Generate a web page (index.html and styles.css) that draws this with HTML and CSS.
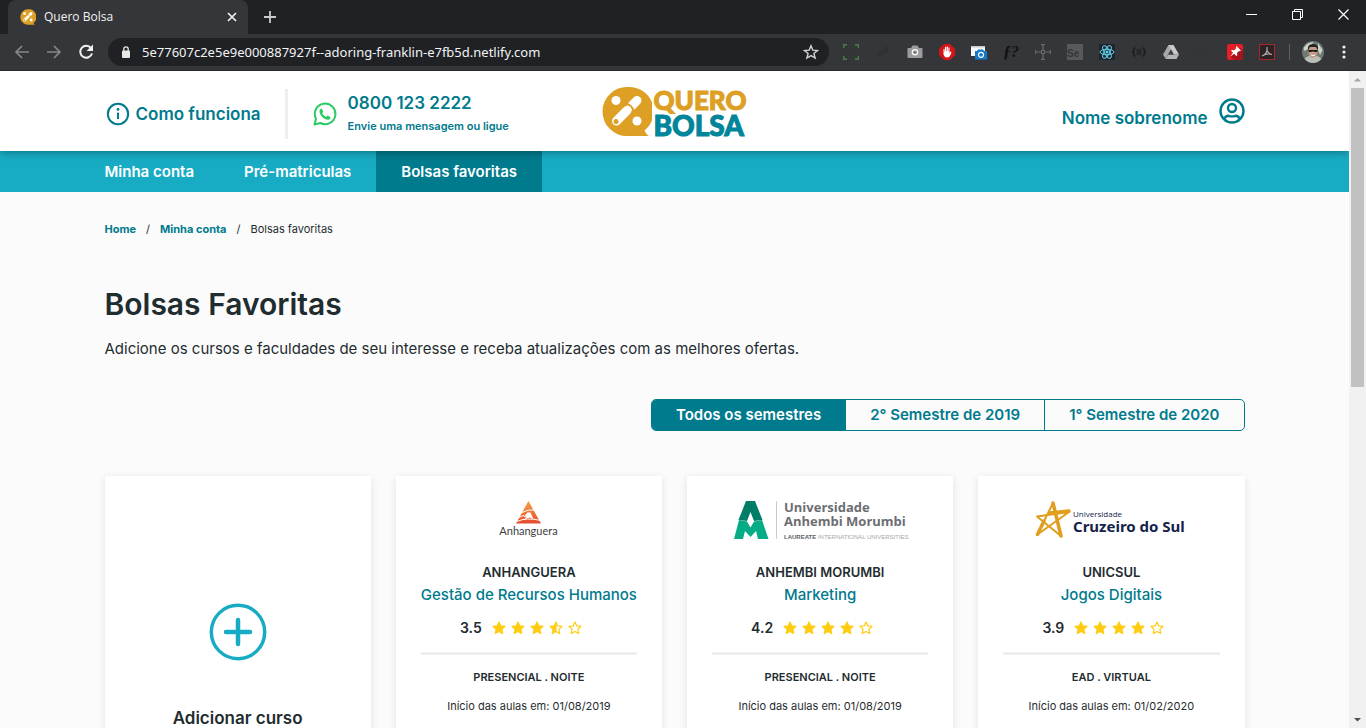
FILE: index.html
```html
<!DOCTYPE html>
<html lang="pt-BR">
<head>
<meta charset="utf-8">
<meta name="viewport" content="width=device-width, initial-scale=1">
<title>Quero Bolsa</title>
<link rel="stylesheet" href="styles.css">
</head>
<body>
<svg class="defs" aria-hidden="true">
  <defs>
    <symbol id="mark" viewBox="0 0 50 51">
      <path d="M25 1a24.500 24.500 0 1 0 0 49h22c-2-1.300-3.500-3-4.500-5.500A24.500 24.500 0 0 0 25 1z" fill="#dd9f24"/>
      <circle cx="14" cy="14.500" r="4.500" fill="#fff"/>
      <circle cx="35" cy="35" r="4.500" fill="#fff"/>
      <path d="M29.500 20l5.500-5.500M14.500 35L25 24.500" stroke="#fff" stroke-width="9" stroke-linecap="round"/>
      <path d="M24 17.500c4 1 6.500 3.500 7.500 7.500" stroke="#dd9f24" stroke-width="2" fill="none"/>
      <circle cx="14" cy="35.500" r="2.500" fill="#dd9f24"/>
    </symbol>
    <symbol id="star" viewBox="0 0 14 14">
      <path d="M7 1l1.800 3.900 4.200.5-3.100 2.900.8 4.300L7 10.500l-3.700 2.100.8-4.300L1 5.400l4.200-.5z" fill="#fc1" stroke="#fc1" stroke-width="1.200" stroke-linejoin="round"/>
    </symbol>
    <symbol id="star-empty" viewBox="0 0 14 14">
      <path d="M7 1l1.800 3.900 4.200.5-3.100 2.900.8 4.300L7 10.500l-3.700 2.100.8-4.300L1 5.400l4.200-.5z" fill="none" stroke="#fc1" stroke-width="1.200" stroke-linejoin="round"/>
    </symbol>
    <symbol id="star-half" viewBox="0 0 14 14">
      <path d="M7 1l1.800 3.900 4.200.5-3.100 2.900.8 4.300L7 10.500l-3.700 2.100.8-4.300L1 5.400l4.200-.5z" fill="none" stroke="#fc1" stroke-width="1.200" stroke-linejoin="round"/>
      <path d="M7.500 1v9.500L3.300 12.600l.8-4.300L1 5.400l4.200-.5z" fill="#fc1"/>
    </symbol>
  </defs>
</svg>

<div class="tabstrip">
  <div class="tab">
    <svg class="tab-icon"><use href="#mark"/></svg>
    <span class="tab-title">Quero Bolsa</span>
    <button class="tab-close" aria-label="Fechar guia"><svg viewBox="0 0 10 10"><path d="M1 1l8 8M9 1L1 9" stroke="#f1f1f1" stroke-width="1.700"/></svg></button>
  </div>
  <button class="tab-new" aria-label="Nova guia"><svg viewBox="0 0 12 12"><path d="M6 0v12M0 6h12" stroke="#ccc" stroke-width="1.800"/></svg></button>
  <div class="window-buttons">
    <button aria-label="Minimizar"><svg viewBox="0 0 11 11"><path d="M0 5.500h11" stroke="#fff"/></svg></button>
    <button aria-label="Restaurar"><svg viewBox="0 0 11 11"><path d="M.5 2.500h8v8h-8zM2.500 2.500v-2h8v8h-2" fill="none" stroke="#fff"/></svg></button>
    <button aria-label="Fechar"><svg viewBox="0 0 11 11"><path d="M.5.5l10 10M10.500.5l-10 10" stroke="#fff" stroke-width="1.200"/></svg></button>
  </div>
</div>

<div class="toolbar">
  <div class="history">
    <button aria-label="Voltar"><svg viewBox="0 0 18 18"><path d="M16 9H3M9 3L3 9l6 6" fill="none" stroke="#85878a" stroke-width="1.700"/></svg></button>
    <button aria-label="Avançar"><svg viewBox="0 0 18 18"><path d="M2 9h13M9 3l6 6-6 6" fill="none" stroke="#85878a" stroke-width="1.700"/></svg></button>
    <button aria-label="Recarregar"><svg viewBox="0 0 18 18"><path d="M14 5a6 6 0 1 0 1 5.500" fill="none" stroke="#f1f1f1" stroke-width="2"/><path d="M16 1.500V8H9.500z" fill="#f1f1f1"/></svg></button>
  </div>
  <div class="omnibox">
    <svg class="lock" viewBox="0 0 10 12"><rect x="1" y="4.500" width="8" height="7.500" rx="1" fill="#e8e8e8"/><path d="M2.800 5V3a2.200 2.200 0 0 1 4.400 0v2" fill="none" stroke="#e8e8e8" stroke-width="1.300"/></svg>
    <input class="address" aria-label="Endereço" value="5e77607c2e5e9e000887927f--adoring-franklin-e7fb5d.netlify.com">
    <button class="bookmark" aria-label="Favorito"><svg viewBox="0 0 16 16"><path d="M8 1.800l1.800 4.300 4.700.4-3.600 3 1.200 4.600L8 11.600l-4.100 2.500 1.200-4.600-3.600-3 4.700-.4z" fill="none" stroke="#d2d3d4" stroke-width="1.400"/></svg></button>
  </div>
  <div class="extensions">
    <svg viewBox="0 0 16 16"><path d="M.7 4V.7H4M12 .7h3.300V4M15.300 12v3.300H12M4 15.300H.7V12" fill="none" stroke="#487c45" stroke-width="1.500"/><rect x="3" y="5" width="10" height="6" rx="1" fill="none" stroke="#303733"/></svg>
    <svg viewBox="0 0 16 16"><path d="M3 13c-3-3 1-4 3-6s5-6 7-4-1 5-3 6-5 5-7 4z" fill="#303134"/></svg>
    <svg viewBox="0 0 16 16"><path d="M1.500 4H4l1.500-2.500h5L12 4h2.500q1 0 1 1v8q0 1-1 1h-13q-1 0-1-1V5q0-1 1-1z" fill="#9c9c9c"/><circle cx="8" cy="8.300" r="3.300" fill="#f5f5f5"/><circle cx="8" cy="8.300" r="1.800" fill="#777"/></svg>
    <svg viewBox="0 0 16 16"><path d="M5 0h6l5 5v6l-5 5H5l-5-5V5z" fill="#d31517"/><path d="M4.500 7.500v3q1 3 3.500 3 2.500 0 3.500-2.500l1-3-1-.5-1 1.500V3.500H9.400V7h-.5V2.500H7.700V7h-.5V3H6v4.500h-.4V5H4.500z" fill="#fff"/></svg>
    <svg viewBox="0 0 16 16"><rect y="2" width="14" height="10" fill="#fafafa"/><path d="M0 2h14v1.500H0z" fill="#cacaca"/><path d="M4 7h2l1-1.500h5L13 7h3v8.500H4z" fill="#127acb"/><circle cx="10" cy="10.800" r="2.500" fill="none" stroke="#fff" stroke-width="1.200"/></svg>
    <span class="ext-font">ƒ?</span>
    <svg viewBox="0 0 16 16"><path d="M8 1v14M1 8h14M6 .7h4M6 15.300h4M.7 6v4M15.300 6v4" stroke="#68696b" stroke-width="1.200"/><rect x="6.500" y="6.500" width="3" height="3" fill="#35363a" stroke="#68696b"/></svg>
    <span class="ext-se">Se</span>
    <svg viewBox="0 0 16 16"><path fill="#20242b" d="M0 0h16v16H0z"/><g fill="none" stroke="#61cfec"><ellipse cx="8" cy="8" rx="7" ry="2.700"/><ellipse cx="8" cy="8" rx="7" ry="2.700" transform="rotate(60 8 8)"/><ellipse cx="8" cy="8" rx="7" ry="2.700" transform="rotate(120 8 8)"/></g><circle cx="8" cy="8" r="1.500" fill="#61cfec"/></svg>
    <svg viewBox="0 0 16 16"><path d="M5 4H3.800q-1 0-1 1.200v1.600L1.500 8l1.300 1.200v1.600q0 1.200 1 1.200H5M11 4h1.200q1 0 1 1.200v1.600L14.500 8l-1.300 1.200v1.600q0 1.200-1 1.200H11M5.500 6h5M5.500 8h5M5.500 10h5" fill="none" stroke="#17181a" stroke-width="1.200"/></svg>
    <svg viewBox="0 0 16 16"><path d="M5.500 1h5l-5.500 9.500L2.700 15 0 10.500z" fill="#a8a8a8"/><path d="M5.500 1h5L16 10.500h-5.200z" fill="#c9c9c9"/><path d="M5.200 10.500H16L13.500 15H2.700z" fill="#b5b5b5"/><path d="M8 5.800l2.700 4.700H5.300z" fill="#414245"/></svg>
    <svg viewBox="0 0 16 16"><path d="M3 6l4-3 4 2-3 5-4-1z" fill="none" stroke="#323337"/></svg>
    <svg viewBox="0 0 16 16"><rect width="16" height="16" rx="2" fill="#e61d24"/><path d="M13 4l3 3v7q0 2-2 2H8l-5-3z" fill="#a8141a"/><path d="M9.500 2l4.500 4.500-1.200.7-.8-.2-2 2 .3 2.200-1 .8-2.200-2.200L3 13l3-4.200L4 6.700l1-.8 2.200.3 2-2-.3-1.200z" fill="#fff"/></svg>
    <svg viewBox="0 0 16 16"><rect x=".5" y=".5" width="15" height="15" fill="#2b2324" stroke="#a8272b"/><path d="M8 3v3.500c1 2.500 2.500 3.500 5 4-3-1-6-1-10 1.500 3-1 4.500-3.500 5-5.500" fill="none" stroke="#b0a5a6" stroke-width="1.200"/></svg>
  </div>
  <span class="separator"></span>
  <svg class="avatar" viewBox="0 0 22 22"><circle cx="11" cy="11" r="11" fill="#6f7a70"/><path d="M1.500 7q4-6 10-6l-4 6-5 3zM16 2l4.500 7-2.500 5-2-5z" fill="#cdd5cb"/><path d="M2.500 18q4-4 8.500-4t8.500 4q-4 4-8.500 4t-8.500-4z" fill="#b9beb8"/><ellipse cx="11" cy="11" rx="4.500" ry="6" fill="#c39b86"/><path d="M6 9q-1-6 5-6t5 6l-2-3H8z" fill="#242322"/><path d="M6.500 9h9v1.200q-1 1.600-3.500.4h-2q-2.500 1.200-3.500-.4z" fill="#171717"/><path d="M9 14q2 1.500 4 0" stroke="#fff" fill="none"/></svg>
  <button class="menu" aria-label="Menu"><svg viewBox="0 0 18 18"><g fill="#f1f1f1"><circle cx="9" cy="4" r="1.600"/><circle cx="9" cy="9" r="1.600"/><circle cx="9" cy="14" r="1.600"/></g></svg></button>
</div>

<div class="viewport">
  <div class="page">
    <header class="header">
      <div class="container header-row">
        <div class="header-left">
          <a class="how" href="#"><svg class="icon-info" viewBox="0 0 26 26"><circle cx="13" cy="13" r="11" fill="none" stroke="#007a8d" stroke-width="2.200"/><path d="M13 11.500v7" stroke="#007a8d" stroke-width="2.200"/><circle cx="13" cy="8" r="1.500" fill="#007a8d"/></svg>Como funciona</a>
          <div class="contact">
            <svg class="icon-whats" viewBox="0 0 24 24"><path d="M1.500 22.500L3 16.700A10.300 10.300 0 1 1 7.300 21z" fill="none" stroke="#2bcb64" stroke-width="2" stroke-linejoin="round"/><path d="M8.700 6.500l1.600 3.200-1.100 1.500q1.200 2.500 3.800 3.700l1.400-1.500 3.100 1.500q0 2.800-3 2.800-6-1-8-7.500-.3-3 2.200-3.700z" fill="#2bcb64"/></svg>
            <div>
              <a class="phone" href="tel:08001232222">0800 123 2222</a>
              <p class="contact-note">Envie uma mensagem ou ligue</p>
            </div>
          </div>
        </div>
        <a class="brand" href="#"><svg class="brand-mark"><use href="#mark"/></svg><span class="brand-text"><span class="brand-quero">QUERO</span><span class="brand-bolsa">BOLSA</span></span></a>
        <a class="user" href="#"><span class="user-name">Nome sobrenome</span><svg class="icon-user" viewBox="0 0 26 26"><g fill="none" stroke="#007a8d" stroke-width="2.400"><circle cx="13" cy="13" r="11.500"/><circle cx="13" cy="10" r="4"/><path d="M5 21q2-3.500 4.500-3.200 3.500 1.200 7 0Q19 17.500 21 21"/></g></svg></a>
      </div>
    </header>
    <nav class="nav">
      <div class="container nav-row">
        <a href="#">Minha conta</a>
        <a href="#">Pré-matriculas</a>
        <a class="active" href="#">Bolsas favoritas</a>
      </div>
    </nav>
    <main class="container">
      <div class="breadcrumb"><a href="#">Home</a><span>/</span><a href="#">Minha conta</a><span>/</span><span>Bolsas favoritas</span></div>
      <h1>Bolsas Favoritas</h1>
      <p class="lead">Adicione os cursos e faculdades de seu interesse e receba atualizações com as melhores ofertas.</p>
      <div class="filters">
        <button class="selected">Todos os semestres</button>
        <button>2° Semestre de 2019</button>
        <button>1° Semestre de 2020</button>
      </div>
      <div class="cards">
        <button class="card card-add">
          <svg class="icon-plus" viewBox="0 0 58 58"><circle cx="29" cy="29" r="26.700" fill="none" stroke="#18acc4" stroke-width="3.500"/><path d="M29 17v24M17 29h24" stroke="#18acc4" stroke-width="4.500" stroke-linecap="round"/></svg>
          <span>Adicionar curso</span>
        </button>
        <article class="card">
          <svg class="logo" viewBox="0 0 217 42"><defs><linearGradient id="fire" x2="0" y2="1"><stop stop-color="#f7a13f"/><stop offset="1" stop-color="#e34b31"/></linearGradient></defs><path d="M108.500 1L121 23.500H96z" fill="url(#fire)"/><path d="M102 12.500q6-3.500 12-2.500M99 17.500q2.500-1.500 5-2M97 21.500q9-4.500 24-1" fill="none" stroke="#fff"/><path d="M103.500 17l4-4.500h3l3 6.500-4-1.500-5 1.500 2-2.500z" fill="#fff"/><text x="108.500" y="35" text-anchor="middle" class="logo-anh">Anhanguera</text></svg>
          <h2>ANHANGUERA</h2>
          <a class="course" href="#">Gestão de Recursos Humanos</a>
          <div class="rating"><strong>3.5</strong><span class="stars"><svg><use href="#star"/></svg><svg><use href="#star"/></svg><svg><use href="#star"/></svg><svg><use href="#star-half"/></svg><svg><use href="#star-empty"/></svg></span></div>
          <hr>
          <p class="mode">PRESENCIAL . NOITE</p>
          <p class="start">Início das aulas em: 01/08/2019</p>
        </article>
        <article class="card">
          <svg class="logo" viewBox="0 0 217 42"><path d="M34 1h9l7.500 19-8.500 1-3.500-9-3.500 9-8.500-1z" fill="#007d69"/><path d="M27 20l8 1.500 3.500 6 3.500-6 8-1.500 6.500 19H46l-2-8-5.500 6L33 31l-2 8H22z" fill="#05ac85"/><path d="M64.500 1v38" stroke="#c8cacb"/><text x="72" y="12" class="logo-amu">Universidade</text><text x="72" y="26" class="logo-amu">Anhembi Morumbi</text><text x="72" y="39" class="logo-laureate"><tspan font-weight="700" fill="#5d6063">LAUREATE</tspan> INTERNATIONAL UNIVERSITIES</text></svg>
          <h2>ANHEMBI MORUMBI</h2>
          <a class="course" href="#">Marketing</a>
          <div class="rating"><strong>4.2</strong><span class="stars"><svg><use href="#star"/></svg><svg><use href="#star"/></svg><svg><use href="#star"/></svg><svg><use href="#star"/></svg><svg><use href="#star-empty"/></svg></span></div>
          <hr>
          <p class="mode">PRESENCIAL . NOITE</p>
          <p class="start">Início das aulas em: 01/08/2019</p>
        </article>
        <article class="card">
          <svg class="logo" viewBox="0 0 217 42"><path d="M50 3L34.500 34.500 66 12 34 16.500 58 36z" fill="none" stroke="#e19d1e" stroke-width="2" stroke-linejoin="round"/><path d="M50 3l8 33M34.500 34.500L41 21M66 11l-19 2" stroke="#e19d1e" stroke-width="3.500" stroke-linecap="round"/><text x="70" y="17" class="logo-uni">Universidade</text><text x="70" y="32" class="logo-sul">Cruzeiro do Sul</text></svg>
          <h2>UNICSUL</h2>
          <a class="course" href="#">Jogos Digitais</a>
          <div class="rating"><strong>3.9</strong><span class="stars"><svg><use href="#star"/></svg><svg><use href="#star"/></svg><svg><use href="#star"/></svg><svg><use href="#star"/></svg><svg><use href="#star-empty"/></svg></span></div>
          <hr>
          <p class="mode">EAD . VIRTUAL</p>
          <p class="start">Início das aulas em: 01/02/2020</p>
        </article>
      </div>
    </main>
  </div>
  <div class="scrollbar"><svg viewBox="0 0 17 17"><path d="M5 10.500h7L8.500 7z" fill="#a3a3a3"/></svg><div class="track"><div class="thumb"></div></div><svg viewBox="0 0 17 17"><path d="M5 7h7l-3.500 3.500z" fill="#505050"/></svg></div>
</div>
</body>
</html>
```
FILE: styles.css
```css
* { box-sizing: border-box; }

body {
  display: flex;
  flex-direction: column;
  height: 100vh;
  margin: 0;
  overflow: hidden;
  background: #fbfbfb;
  color: #1f2d30;
  font-family: Inter, "Liberation Sans", sans-serif;
}

svg { display: block; }
button { padding: 0; border: 0; background: none; color: inherit; font: inherit; }
a { color: #007a8d; text-decoration: none; }
h1, h2, p { margin: 0; }
.defs { position: absolute; width: 0; height: 0; }

/* Browser frame */
.tabstrip {
  display: flex;
  flex: none;
  align-items: center;
  height: 34px;
  padding-left: 8px;
  background: #202124;
}
.tab {
  display: flex;
  align-items: center;
  gap: 8px;
  width: 240px;
  height: 34px;
  padding: 0 11px 0 12px;
  border-radius: 8px 8px 0 0;
  background: #35363a;
  color: #f1f1f1;
  font-family: "Open Sans", sans-serif;
  font-size: 12px;
  line-height: 16px;
}
.tab-icon { width: 16px; height: 16px; }
.tab-title { flex: 1; }
.tab-close svg { width: 10px; height: 10px; }
.tab-new { margin-left: 16px; }
.tab-new svg { width: 12px; height: 12px; }
.window-buttons { display: flex; margin-left: auto; padding: 0 0 6px; }
.window-buttons button { display: grid; place-items: center; width: 46px; height: 28px; }
.window-buttons svg { width: 11px; height: 11px; }

.toolbar {
  display: flex;
  flex: none;
  align-items: center;
  height: 37px;
  padding: 0 13px;
  border-bottom: 1px solid #28292c;
  background: #35363a;
}
.history { display: flex; gap: 14px; margin-right: 13px; }
.history svg, .menu svg { width: 18px; height: 18px; }
.omnibox {
  display: flex;
  flex: 1;
  align-items: center;
  height: 28px;
  padding: 0 10px 0 13px;
  border-radius: 14px;
  background: #202124;
}
.lock { width: 10px; height: 12px; }
.address {
  flex: 1;
  min-width: 0;
  margin-left: 11px;
  padding: 0;
  border: 0;
  outline: 0;
  background: none;
  color: #f1f3f4;
  font-family: "Noto Sans", sans-serif;
  font-size: 13px;
}
.bookmark svg { width: 16px; height: 16px; }
.extensions { display: flex; gap: 16px; margin-left: 14px; }
.extensions svg, .extensions span { width: 16px; height: 16px; }
.ext-font {
  color: #111;
  font: italic 700 16px/16px "Liberation Serif", serif;
  white-space: nowrap;
}
.ext-se {
  background: #58595b;
  color: #35363a;
  font: 700 10px/20px "Liberation Sans", sans-serif;
}
.separator { width: 1px; height: 16px; margin: 0 12px 0 14px; background: #5f6063; }
.avatar { width: 22px; height: 22px; }
.menu { margin-left: 11px; }

.viewport { display: flex; flex: 1; min-height: 0; }
.page { flex: 1; overflow: hidden; }
.scrollbar { display: flex; flex-direction: column; width: 17px; background: #f1f1f1; }
.scrollbar svg { flex: none; width: 17px; height: 17px; }
.track { flex: 1; padding: 0 2px; }
.thumb { height: 48%; background: #c1c1c1; }

/* Site */
.container { width: 100%; max-width: 1140px; margin: 0 auto; }

.header {
  position: relative;
  z-index: 1;
  background: #fff;
  box-shadow: 0 2px 8px rgba(0, 0, 0, .3);
}
.header a, .header p { color: #007a8d; font-weight: 600; }
.header-row {
  display: grid;
  grid-template-columns: 1fr auto 1fr;
  align-items: center;
  height: 80px;
}
.header-left { display: flex; align-items: center; padding-top: 6px; }
.how {
  display: flex;
  align-items: center;
  gap: 6px;
  height: 50px;
  padding-right: 24px;
  border-right: 3px solid #eee;
  font-size: 17px;
}
.icon-info { width: 24px; height: 24px; margin-left: 1px; }
.contact { display: flex; align-items: center; gap: 11px; margin-left: 25px; }
.icon-whats { width: 24px; height: 24px; }
.phone { display: block; font-size: 17px; line-height: 24px; }
.contact-note { font-size: 11px; line-height: 22px; }
.brand { display: flex; align-items: center; gap: 1px; }
.brand-mark { width: 50px; height: 51px; }
.brand-text {
  display: flex;
  flex-direction: column;
  padding-top: 3px;
  -webkit-text-stroke: 1px currentColor;
}
.brand .brand-quero { color: #dd9f24; font: 900 26px/25px Lato, sans-serif; }
.brand .brand-bolsa { color: #00859a; font: 900 28px/25px Lato, sans-serif; }
.user { display: flex; align-items: center; justify-content: flex-end; gap: 11px; font-size: 17px; }
.user-name { padding-top: 14px; }
.icon-user { width: 26px; height: 26px; }

.nav { background: #18acc4; }
.nav-row { display: flex; }
.nav a {
  padding: 0 25px;
  color: #fff;
  font-size: 15px;
  font-weight: 600;
  line-height: 41px;
}
.nav a:first-child { margin-left: -25px; }
.nav .active { background: #007a8d; }

.breadcrumb {
  display: flex;
  gap: 10px;
  padding-top: 27px;
  font-size: 11px;
  line-height: 20px;
}
.breadcrumb a { font-weight: 700; }
h1 { margin-top: 45px; font-size: 30px; font-weight: 600; line-height: 40px; }
.lead { margin-top: 12px; font-size: 15px; line-height: 26px; }

.filters {
  display: flex;
  width: max-content;
  margin: 37px 0 0 auto;
  overflow: hidden;
  border: 1px solid #007a8d;
  border-radius: 5px;
}
.filters button {
  padding: 0 24px;
  color: #007a8d;
  font-size: 15px;
  font-weight: 600;
  line-height: 30px;
}
.filters button + button { border-left: 1px solid #007a8d; }
.filters .selected { background: #007a8d; color: #fff; }

.cards {
  display: grid;
  grid-template-columns: repeat(4, minmax(0, 1fr));
  gap: 25px;
  margin-top: 45px;
}
.card {
  display: flex;
  flex-direction: column;
  align-items: center;
  padding: 24px 25px 80px;
  background: #fff;
  box-shadow: 0 2px 8px rgba(0, 0, 0, .1);
}
.card-add { gap: 46px; padding-top: 127px; font-size: 17px; font-weight: 600; line-height: 22px; }
.icon-plus { width: 58px; height: 58px; }
.logo { width: 217px; height: 42px; overflow: visible; }
.logo-anh { fill: #3d3d40; font: 11px Lato, sans-serif; }
.logo-amu { fill: #6c6e71; font: 700 13px "Open Sans", sans-serif; }
.logo-laureate { fill: #a5a7a9; font: 6px "Liberation Sans", sans-serif; }
.logo-uni { fill: #14234b; font: 8px "Open Sans", sans-serif; }
.logo-sul { fill: #14234b; font: 700 15px "Noto Sans", sans-serif; }
h2 { margin-top: 20px; font-size: 13px; font-weight: 600; line-height: 20px; }
.course { margin-top: 1px; font-size: 15px; font-weight: 500; line-height: 24px; white-space: nowrap; }
.rating { display: flex; align-items: center; gap: 10px; margin-top: 11px; padding-right: 16px; }
.rating strong { font-size: 14px; font-weight: 600; line-height: 20px; }
.stars { display: flex; gap: 5px; }
.stars svg { width: 14px; height: 14px; }
hr { width: 100%; height: 3px; margin: 14px 0 12px; border: 0; background: #eee; }
.mode { font-size: 11px; font-weight: 600; line-height: 20px; }
.start { margin-top: 9px; font-size: 11px; line-height: 20px; white-space: nowrap; }
```
